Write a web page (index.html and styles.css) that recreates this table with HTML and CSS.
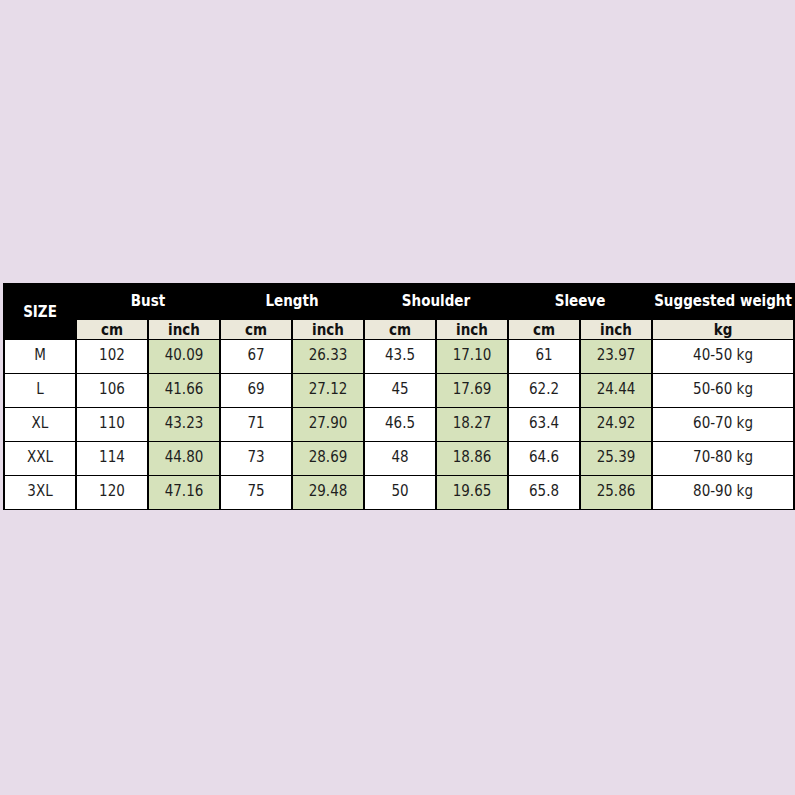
FILE: index.html
```html
<!DOCTYPE html>
<html>
<head>
<meta charset="utf-8">
<link rel="stylesheet" href="styles.css">
</head>
<body>
<div class="page">
<table class="chart">
<colgroup>
<col class="c-size"><col class="c-n"><col class="c-n"><col class="c-n"><col class="c-n"><col class="c-n"><col class="c-n"><col class="c-n"><col class="c-n"><col class="c-w">
</colgroup>
<thead>
<tr class="head">
<th rowspan="2" class="size-h">SIZE</th>
<th colspan="2">Bust</th>
<th colspan="2">Length</th>
<th colspan="2">Shoulder</th>
<th colspan="2">Sleeve</th>
<th>Suggested weight</th>
</tr>
<tr class="sub">
<th>cm</th><th>inch</th><th>cm</th><th>inch</th><th>cm</th><th>inch</th><th>cm</th><th>inch</th><th>kg</th>
</tr>
</thead>
<tbody>
<tr><td>M</td><td>102</td><td class="g">40.09</td><td>67</td><td class="g">26.33</td><td>43.5</td><td class="g">17.10</td><td>61</td><td class="g">23.97</td><td>40-50 kg</td></tr>
<tr><td>L</td><td>106</td><td class="g">41.66</td><td>69</td><td class="g">27.12</td><td>45</td><td class="g">17.69</td><td>62.2</td><td class="g">24.44</td><td>50-60 kg</td></tr>
<tr><td>XL</td><td>110</td><td class="g">43.23</td><td>71</td><td class="g">27.90</td><td>46.5</td><td class="g">18.27</td><td>63.4</td><td class="g">24.92</td><td>60-70 kg</td></tr>
<tr><td>XXL</td><td>114</td><td class="g">44.80</td><td>73</td><td class="g">28.69</td><td>48</td><td class="g">18.86</td><td>64.6</td><td class="g">25.39</td><td>70-80 kg</td></tr>
<tr><td>3XL</td><td>120</td><td class="g">47.16</td><td>75</td><td class="g">29.48</td><td>50</td><td class="g">19.65</td><td>65.8</td><td class="g">25.86</td><td>80-90 kg</td></tr>
</tbody>
</table>
</div>
</body>
</html>
```

FILE: styles.css
```css
html, body {
  margin: 0;
  padding: 0;
  background: #e7dce9;
}
.page {
  height: 795px;
  display: flex;
  align-items: flex-start;
  padding-top: 283px;
  padding-left: 3px;
  box-sizing: border-box;
}
.chart {
  border-collapse: collapse;
  table-layout: fixed;
  width: 790px;
  font-family: "DejaVu Sans Condensed", "DejaVu Sans", sans-serif;
  font-size: 15px;
  color: #1e1e1e;
  background: #ffffff;
}
.c-size { width: 72px; }
.c-n { width: 72px; }
.c-w { width: 142px; }
.chart th, .chart td {
  text-align: center;
  padding: 0;
  border-left: 2px solid #000;
  border-right: 2px solid #000;
  border-top: 1px solid #000;
  border-bottom: 1px solid #000;
}
.head th {
  background: #000;
  color: #fff;
  height: 34px;
  font-weight: bold;
  font-size: 15px;
  padding-bottom: 1px;
}
.head th.size-h {
  vertical-align: middle;
  padding-bottom: 0;
  padding-top: 1px;
}
.sub th {
  background: #ebe8da;
  color: #111;
  height: 19px;
  font-weight: bold;
  font-size: 15px;
  line-height: 18px;
}
.chart td {
  height: 30px;
  padding-bottom: 3px;
}
.chart td.g {
  background: #d6e2bb;
}
```
